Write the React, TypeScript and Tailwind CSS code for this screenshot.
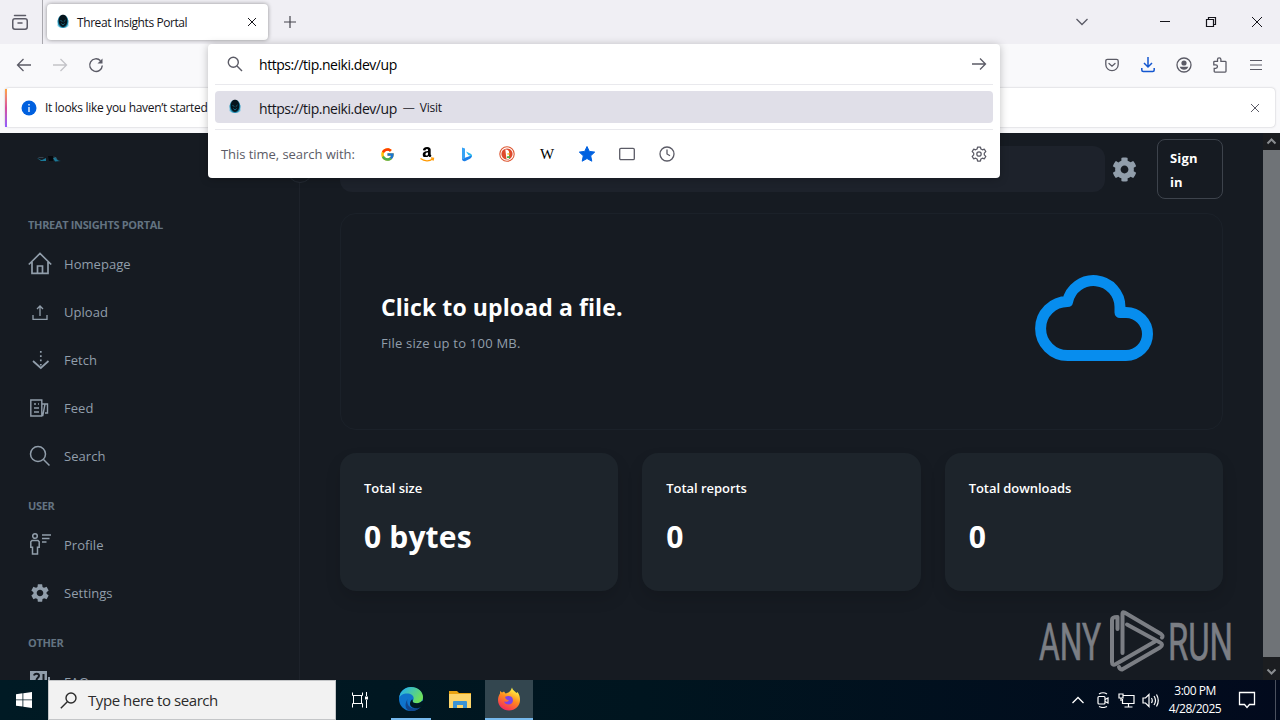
import { ReactNode } from 'react';
import { MdSettings } from 'react-icons/md';
import { FcGoogle } from 'react-icons/fc';
import { FaAmazon, FaCog } from 'react-icons/fa';

interface IconProps {
  children: ReactNode;
  size?: number;
  width?: number;
  className?: string;
}

// Shared wrapper for the stroked icons
const Icon = ({ children, size = 16, width = 1.3, className = '' }: IconProps) => (
  <svg
    width={size}
    height={size}
    viewBox={`0 0 ${size} ${size}`}
    fill="none"
    stroke="currentColor"
    strokeWidth={width}
    className={`shrink-0 ${className}`}
  >
    {children}
  </svg>
);

const Favicon = () => (
  <svg width="16" height="16" viewBox="0 0 16 16" className="shrink-0">
    <path d="M2.5 6v6l2 1.500h7l2-1.500V6" fill="#3bb9df" opacity=".6" />
    <path d="M8 1c3.200 0 5.300 2.900 5.300 6.500S11.200 14 8 14s-5.300-2.900-5.300-6.500S4.800 1 8 1Z" fill="#1b83a6" />
    <path d="M8 .8c2.700 0 4.300 2.700 4.300 6S10.600 13 8 13s-4.300-2.900-4.300-6.200S5.300.8 8 .8Z" fill="#06141c" />
    <path d="M5.500 6 7.300 7.800M10.500 6 8.700 7.800M6.300 9.500 8 11l1.700-1.500" stroke="#1c6f88" fill="none" strokeWidth=".9" />
  </svg>
);

/* ---------- Browser chrome ---------- */

const TabBar = () => (
  <div className="flex h-11 items-center bg-[#f0eff4] text-[#15141a]">
    <div className="flex h-11 w-[43px] items-center justify-center border-r border-[#a9a8ae] pr-[3px] text-[#5b5b66]">
      <Icon size={18} width={1.5}>
        <rect x="1.75" y="5.75" width="14.5" height="10.5" rx="2.2" />
        <path d="M3.5 2.5h11M7 10h4" strokeLinecap="round" />
      </Icon>
    </div>
    <div className="ml-1 flex h-9 w-[221px] items-center rounded bg-white pl-2 shadow-[0_0_4px_rgba(0,0,0,0.4)]">
      <Favicon />
      <span className="ml-1.5 flex-1 pt-0.5 text-[12px] tracking-[-0.42px] whitespace-nowrap">Threat Insights Portal</span>
      <Icon size={10} width={1} className="mr-[11px]">
        <path d="m1 1 8 8M9 1 1 9" />
      </Icon>
    </div>
    <Icon size={14} width={1.2} className="ml-[15px] text-[#45444c]">
      <path d="M7 1v12M1 7h12" />
    </Icon>
    <div className="flex-1" />
    <Icon size={14} width={1.3} className="mr-[70px] text-[#5b5b66]">
      <path d="m1.500 4 5.500 5.500L12.500 4" />
    </Icon>
    <Icon size={12} width={1} className="mr-[34px]">
      <path d="M1 5.500h10" />
    </Icon>
    <Icon size={12} width={1.2} className="mr-[34px]">
      <path d="M1.500 3.500h7v7h-7zM3.500 3.500v-2h7v7h-2" />
    </Icon>
    <Icon size={12} width={1} className="mr-[17px]">
      <path d="m1 1 10 10M11 1 1 11" />
    </Icon>
  </div>
);

const Toolbar = () => (
  <div className="flex h-11 items-center bg-[#f9f9fb] pb-[3px] text-[#5b5b66]">
    <Icon className="ml-4">
      <path d="M15 8H1.500M7.500 2l-6 6 6 6" />
    </Icon>
    <Icon className="ml-5 text-[#c3c3c8]">
      <path d="M1 8h13.500M8.500 2l6 6-6 6" />
    </Icon>
    <Icon className="ml-5" width={1.4}>
      <path d="M14.300 8.500A6.300 6.300 0 1 1 12.500 3.700" />
      <path d="M14.500 1.500v5h-5z" fill="currentColor" stroke="none" />
    </Icon>
    <div className="flex-1" />
    <Icon className="mr-5">
      <path d="M1.800 4c0-1.100.6-1.700 1.700-1.700h9c1.100 0 1.700.6 1.700 1.700v3.500a6.200 6.200 0 0 1-12.400 0Z" />
      <path d="m5 6.500 3 2.700 3-2.700" strokeLinecap="round" />
    </Icon>
    <Icon className="mr-5 text-[#1457d0]" width={1.5}>
      <path d="M8 0v9.500M4 6l4 4 4-4M1.800 11v2c0 1 .5 1.500 1.500 1.500h9.400c1 0 1.500-.5 1.500-1.500v-2" />
    </Icon>
    <Icon className="mr-5">
      <circle cx="8" cy="8" r="7" />
      <circle cx="8" cy="6" r="2.6" fill="currentColor" stroke="none" />
      <path d="M3.700 9.700h8.600c-.6 2-2.300 3-4.300 3s-3.700-1-4.300-3Z" fill="currentColor" stroke="none" />
    </Icon>
    <Icon className="mr-5">
      <path d="M5.500 4.300V2.500a1.700 1.700 0 0 1 3.400 0v1.800h4.300c.4 0 .8.300.8.800v9.200c0 .5-.4.800-.8.800H3c-.5 0-.8-.3-.8-.8v-3h1.500a1.500 1.500 0 0 0 0-3.500H1.800V5c0-.4.300-.7.700-.7Z" />
    </Icon>
    <Icon className="mr-4" width={1.2}>
      <path d="M2 3.500h12M2 8h12M2 12.500h12" />
    </Icon>
  </div>
);

const NotificationBar = () => (
  <div className="h-[45px] bg-[#f9f9fb] px-[5px]">
    <div className="flex h-[39px] items-center rounded bg-white pt-px shadow-[0_0_2px_rgba(58,57,68,0.35)]">
      <div className="h-full w-0.5 bg-linear-to-b from-[#ffa436] via-[#d74c9e] to-[#9059ff]" />
      <svg width="16" height="16" viewBox="0 0 16 16" className="ml-3.5 shrink-0">
        <circle cx="8" cy="8" r="7.5" fill="#0060df" />
        <path d="M8 7v5M8 4v1.500" stroke="#fff" strokeWidth="1.3" />
      </svg>
      <span className="ml-2 text-[12px] tracking-[-0.31px] whitespace-nowrap text-[#15141a]">It looks like you haven’t started</span>
      <div className="flex-1" />
      <Icon size={10} width={1} className="mr-[15px] text-[#5b5b66]">
        <path d="m1 1 8 8M9 1 1 9" />
      </Icon>
    </div>
  </div>
);

const BingLogo = () => (
  <svg width="16" height="16" viewBox="0 0 16 16">
    <path d="M3 1.500 6 2.600v9.200L3 13.500Z" fill="#37a3f5" />
    <path d="M3 13.300 6 11.800l7-2.500c.1 1.700-.7 2.700-2 3.400L6.500 15c-1.800.7-3.200-.2-3.500-1.700Z" fill="#1b7fe8" />
    <path d="m7 5.500 4.700 2.200c1.100.6 1.500 1.500 1.200 2.800L9.300 9Z" fill="#28b7ee" />
  </svg>
);

const DuckLogo = () => (
  <svg width="16" height="16" viewBox="0 0 16 16">
    <circle cx="8" cy="8" r="7.2" fill="#fff" stroke="#de5833" strokeWidth="1.1" />
    <circle cx="8" cy="8" r="5.6" fill="#de4a2d" />
    <path d="M6.300 3.500c2.500-.3 4 1.200 3.800 3.500L10 13H7.500Z" fill="#fff" />
    <path d="M8.300 7.300h2.500v1.300H8.300Z" fill="#fdb913" />
    <path d="M8 10.300 11 10v2.200l-3-.3Z" fill="#4caf50" />
  </svg>
);

const GearOutline = () => (
  <Icon size={16} width={1.25}>
    <path d="M6.600 1h2.800l.5 2 1.500.8 2-.6 1.400 2.400-1.500 1.500v1.800l1.500 1.500-1.400 2.400-2-.6-1.500.8-.5 2H6.600l-.5-2-1.500-.8-2 .6-1.400-2.400 1.500-1.500V7.100L1.200 5.600l1.400-2.400 2 .6L6.100 3Z" strokeLinejoin="round" />
    <circle cx="8" cy="8" r="2.2" />
  </Icon>
);

const searchEngines: ReactNode[] = [
  <FcGoogle size={15} />,
  <span className="relative h-4 w-4">
    <FaAmazon size={16} className="text-black" />
    <svg width="16" height="6" viewBox="0 0 16 6" className="absolute -bottom-px left-0 bg-white">
      <path d="M1.500 1.500c4 3 9 3 12 .5M12 1l2.500.3-.5 2.400" fill="none" stroke="#f90" strokeWidth="1.3" />
    </svg>
  </span>,
  <BingLogo />,
  <DuckLogo />,
  <span className="font-['Liberation_Serif',serif] text-[15px] leading-none text-black">W</span>,
  <svg width="18" height="18" viewBox="0 0 18 18" fill="#0061e0">
    <path d="m9 1.500 2.300 4.900 5.400.7-4 3.700 1.100 5.400L9 13.500l-4.800 2.700 1.100-5.400-4-3.700 5.400-.7Z" stroke="#0061e0" strokeLinejoin="round" />
  </svg>,
  <Icon>
    <rect x=".7" y="2.4" width="14.6" height="11.2" rx="1.2" />
  </Icon>,
  <Icon>
    <circle cx="8" cy="8" r="7" />
    <path d="M8 3.500V8l3 1.800" />
  </Icon>,
];

const UrlDropdown = () => (
  <div className="absolute top-11 left-[208px] flex h-[134px] w-[792px] flex-col rounded bg-white px-[7px] text-[#15141a] shadow-[0_1px_8px_rgba(0,0,0,0.25)]">
    <div className="flex h-[41px] items-center border-b border-[#e9e9ed] pl-3 text-[#5b5b66]">
      <Icon width={1.4}>
        <circle cx="6.3" cy="6.3" r="5" />
        <path d="m10 10 5 5" />
      </Icon>
      <span className="ml-4 flex-1 pt-px text-[14px] tracking-[-0.46px] text-black">https://tip.neiki.dev/up</span>
      <Icon className="mr-1.5">
        <path d="M1 8h13.500M9 2.500 14.500 8 9 13.500" />
      </Icon>
    </div>
    <div className="mt-1.5 flex h-8 shrink-0 items-center rounded-sm bg-[#e0dfe8] pl-3">
      <Favicon />
      <span className="ml-4 pt-0.5 text-[14px] tracking-[-0.46px] whitespace-nowrap">https://tip.neiki.dev/up</span>
      <span className="ml-1.5 pt-0.5 text-[12px] text-[#45444c]">—</span>
      <span className="ml-[5px] pt-0.5 text-[12px] tracking-[-0.2px]">Visit</span>
    </div>
    <div className="mt-1.5 flex h-[49px] shrink-0 items-center border-t border-[#e9e9ed] pl-1.5 text-[#5b5b66]">
      <span className="w-[146px] pt-0.5 text-[13px] tracking-[-0.05px] whitespace-nowrap">This time, search with:</span>
      {searchEngines.map((engine, i) => (
        <span key={i} className="flex w-10 items-center justify-center">
          {engine}
        </span>
      ))}
      <span className="mr-1.5 ml-auto">
        <GearOutline />
      </span>
    </div>
  </div>
);

/* ---------- Portal page ---------- */

const HomeIcon = () => (
  <Icon size={24} width={1.7}>
    <path d="M.8 12.500 12 1.500l11.200 11M4 10v11.300h16V10M9.500 21v-7h5v7" />
  </Icon>
);

const UploadIcon = () => (
  <Icon size={24} width={1.3}>
    <path d="M12 16V6M9 9l3-3 3 3M5 15v4.300h14V15" />
  </Icon>
);

const FetchIcon = () => (
  <Icon size={24} width={1.7}>
    <path d="m5 13 7.800 7 7.700-7" />
    <path d="M12.800 3v16" strokeDasharray="1.700 2.600" />
  </Icon>
);

const FeedIcon = () => (
  <Icon size={24} width={1.4}>
    <path d="M2.800 4h11v16h-11zM14 8h5.500v9H17M17 8l-2.300 12M6 8h2M10 8h1M6 12h5M6 16h5" />
  </Icon>
);

const SearchIcon = () => (
  <Icon size={24} width={1.5}>
    <circle cx="10" cy="10" r="7.5" />
    <path d="m15.500 15.500 6 6" />
  </Icon>
);

const ProfileIcon = () => (
  <Icon size={24} width={1.5} className="-mt-0.5">
    <circle cx="7" cy="4" r="2.3" />
    <path d="M4 8.500h6l1.200 1.200v5.500H9.500V22h-5v-6.800H2.800V9.700ZM14 3h9M14 6.500h7.500M14 10h4.500" />
  </Icon>
);

const FaqIcon = () => (
  <svg width="24" height="24" viewBox="0 0 24 24" className="shrink-0" fill="currentColor">
    <path d="M2 1h17v16H6l-4 4Zm18 6h2v14H8v-2h12Z" />
    <path d="M6 5.500C6.500 3 11 3 11 5.800c0 2-2.500 2-2.500 4.400M8.500 12v2M15.500 4v6.500M15.500 12v2" fill="none" stroke="#161b22" strokeWidth="2" />
  </svg>
);

const menu = [
  {
    title: 'THREAT INSIGHTS PORTAL',
    items: [
      { label: 'Homepage', icon: <HomeIcon /> },
      { label: 'Upload', icon: <UploadIcon /> },
      { label: 'Fetch', icon: <FetchIcon /> },
      { label: 'Feed', icon: <FeedIcon /> },
      { label: 'Search', icon: <SearchIcon /> },
    ],
  },
  {
    title: 'USER',
    items: [
      { label: 'Profile', icon: <ProfileIcon /> },
      { label: 'Settings', icon: <MdSettings size={22} className="mx-px" /> },
    ],
  },
  { title: 'OTHER', items: [{ label: 'FAQs', icon: <FaqIcon /> }] },
];

const Sidebar = () => (
  <aside className="w-[300px] shrink-0 overflow-hidden border-r border-[#1d222a] pl-7">
    <div className="h-[66px] pt-[19px] pl-2">
      <svg width="26" height="12" viewBox="0 0 24 12">
        <path d="M0 6c2 .5 3 2 5 2l4-2v3H4ZM24 9c-3 0-4-1-5-4l-3 1 2 3.500Z" fill="#1b7a99" />
        <path d="M1.500 5.500h5M17 4.500l3 3" stroke="#3d4b55" strokeWidth=".8" />
        <path d="M11 4h5v5h-4Z" fill="#05090d" />
      </svg>
    </div>
    {menu.map((section) => (
      <div key={section.title}>
        <div className="h-[41px] pt-[17px] text-[11px] leading-[18px] font-bold tracking-[-0.33px] text-[#637381]">
          {section.title}
        </div>
        {section.items.map((item) => (
          <div key={item.label} className="flex h-12 items-center gap-3 text-[13px] tracking-[0.05px] text-[#919eab]">
            {item.icon}
            <span className="pt-0.5">{item.label}</span>
          </div>
        ))}
      </div>
    ))}
  </aside>
);

const stats = [
  { label: 'Total size', value: '0 bytes' },
  { label: 'Total reports', value: '0' },
  { label: 'Total downloads', value: '0' },
];

const CloudIcon = () => (
  <svg
    width="120"
    height="88"
    viewBox="1034 274 120 88"
    fill="none"
    stroke="#078dee"
    strokeWidth="11"
    strokeLinejoin="round"
    className="mb-[7px]"
  >
    <path d="M1067.600 355.500A27 27 0 0 1 1067.600 301.500A26.500 26.500 0 0 1 1120 307V312.500H1126A21.500 21.500 0 0 1 1126 355.500Z" />
  </svg>
);

const Watermark = () => (
  <svg width="200" height="64" viewBox="0 0 200 64" className="absolute top-[609px] left-[1038px]" fill="none">
    <g fill="#7b7e84" stroke="#7b7e84" strokeWidth=".7" fontFamily="Roboto, sans-serif" fontSize="52">
      <text x="1" y="50.5" textLength="62" lengthAdjust="spacingAndGlyphs">ANY</text>
      <text x="130" y="50.5" textLength="65" lengthAdjust="spacingAndGlyphs">RUN</text>
    </g>
    <g stroke="#7b7e84" strokeWidth="4" strokeLinejoin="round" strokeLinecap="round">
      <path d="M84.500 44V4.500q0-2 2-1L123 25q2.500 2 1 3.500" />
      <path d="M79.500 20V8q-5.500 0-5.500 3v42q0 4 4 2l39-22.500" />
      <path d="m89 15.500 33 18q4 2 0 5L84 60.500q-2 0-3-2.500" />
    </g>
  </svg>
);

const Page = () => (
  <div className="flex h-[547px] overflow-hidden bg-[#161b22]">
    <Sidebar />
    <main className="flex-1 pr-10 pl-10">
      <div className="flex items-center pt-1.5">
        <div className="h-[46px] w-[765px] rounded-xl bg-[#1d222b]" />
        <FaCog size={25} className="ml-[7px] text-[#919eab]" />
        <button className="ml-auto h-[60px] w-[66px] rounded-lg border border-[#3d434c] px-3 pt-0.5 text-left text-[13px] leading-6 font-bold tracking-[0.15px] text-white">
          Sign in
        </button>
      </div>
      <div className="mt-3.5 flex h-[217px] items-center justify-between rounded-2xl border border-[#1b2129] pr-[68px] pl-10">
        <div>
          <h1 className="text-[23px] leading-9 font-bold tracking-[0.1px] text-white">Click to upload a file.</h1>
          <p className="mt-1.5 text-[13px] leading-6 tracking-[0.22px] text-[#919eab]">File size up to 100 MB.</p>
        </div>
        <CloudIcon />
      </div>
      <div className="mt-[23px] grid grid-cols-3 gap-6">
        {stats.map((stat) => (
          <div key={stat.label} className="h-[138px] rounded-2xl bg-[#1d242b] px-6 pt-6 text-white shadow-[0_8px_16px_rgba(0,0,0,0.12)]">
            <div className="text-[13px] leading-[22px] font-semibold tracking-[-0.05px]">{stat.label}</div>
            <div className="mt-3.5 text-[30px] leading-[48px] font-bold tracking-[0.15px]">{stat.value}</div>
          </div>
        ))}
      </div>
    </main>
    <div className="flex w-[17px] flex-col items-center bg-[#1b1d20] text-[#8a8d90]">
      <Icon size={17} width={2}>
        <path d="m4.500 10.500 4-4 4 4" />
      </Icon>
      <div className="w-full flex-1 bg-[#6f7377]" />
      <div className="flex h-[23px] items-end">
        <Icon size={17} width={2}>
          <path d="m4.500 6.500 4 4 4-4" />
        </Icon>
      </div>
    </div>
  </div>
);

/* ---------- Windows taskbar ---------- */

const EdgeLogo = () => (
  <svg width="26" height="26" viewBox="0 0 26 26">
    <defs>
      <linearGradient id="edge-top" x1="0" y1="0" x2="1" y2="0.5">
        <stop offset="0.2" stopColor="#2bb5df" />
        <stop offset="1" stopColor="#6ee05a" />
      </linearGradient>
    </defs>
    <circle cx="13" cy="13" r="12" fill="#0f74cc" />
    <path d="M1.200 12C2 5 7 1 13 1c7 0 12 4.600 12 10 0 4-2.600 6.200-6 6.200-3 0-4.300-1-4.300-2 0-.8 1-1.200 1-3C15.700 9.500 12.700 7.500 9 7.500c-4 0-7 2-7.800 4.500Z" fill="url(#edge-top)" />
    <path d="M9.500 13c-1.500 5 2 9.500 7.500 9.500 2.500 0 4.500-.7 6.300-2C21 23.500 17 25 13.500 25 8 25 5.500 20 9.500 13Z" fill="#11478f" />
    <path d="M14.700 15.200c0 1 1.300 2 4.300 2 2 0 4-.8 5.200-2.400l1.800 1-1.800 4.500c-2 1.500-4.200 2-6.200 2-4 0-6-2.300-6-4.500 0-1.800 1-3.400 2.200-4.600.6.800.5 1.400.5 2Z" fill="#001923" />
  </svg>
);

const FolderLogo = () => (
  <svg width="22" height="20" viewBox="0 0 22 20">
    <path d="M0 1h8l2 2h12v4H0Z" fill="#e8a311" />
    <path d="M0 4h22v14H0Z" fill="#fcd56b" />
    <path d="M4 18v-6q0-1 1-1h12q1 0 1 1v6h-4v-3H8v3Z" fill="#3a93d6" />
  </svg>
);

const FirefoxLogo = () => (
  <svg width="24" height="24" viewBox="0 0 24 24">
    <defs>
      <linearGradient id="fox" x1="0.8" y1="0" x2="0.3" y2="1">
        <stop offset="0.1" stopColor="#fff044" />
        <stop offset="0.5" stopColor="#ff8a1d" />
        <stop offset="1" stopColor="#f5265f" />
      </linearGradient>
    </defs>
    <path d="M15 .5c.3 2.500 3 3.500 4.500 5.500l1-1c2 3 2.500 5 2.500 8 0 6-5 10.500-11 10.500S1 19 1 13c0-3 1-5 2-6.500V4l2 1.500L7 4.500l1.500 2c2-.5 5-1 6.500-6Z" fill="url(#fox)" />
    <path d="M8 10c2-1.500 4.500-1.300 6-.5 2.500 1.500 2.500 5.500.5 7-2.500 1.800-6.500.8-7.500-2 2 .7 4 .3 5-1-1.500-.5-3.500-1-4-3.500Z" fill="#7b44e6" />
  </svg>
);

const Taskbar = () => (
  <div className="flex h-10 items-stretch bg-linear-to-r from-[#001a24] via-[#00151f] to-[#020a1d] text-white">
    <div className="flex w-12 items-center justify-center">
      <svg width="16" height="16" viewBox="0 0 16 16" fill="#fff">
        <path d="M0 2.300 6.500 1.300v6.200H0ZM7.300 1.200 16 0v7.500H7.300ZM0 8.300h6.500v6.300L0 13.700ZM7.300 8.300H16V16l-8.700-1.200Z" />
      </svg>
    </div>
    <div className="flex w-72 items-center border border-[#c4c6c8] bg-[#f2f2f2] pl-[11px] text-[#2b2b2b]">
      <Icon size={17} width={1.4}>
        <circle cx="11" cy="6" r="5" />
        <path d="m7.300 9.700-6.500 6.500" />
      </Icon>
      <span className="ml-[11px] text-[15px] tracking-[-0.43px] whitespace-nowrap">Type here to search</span>
    </div>
    <div className="flex w-12 items-center justify-center">
      <Icon size={16} width={1}>
        <path d="M.5.500v3h10v-3M1.500 3.500v8M9.500 3.500v8M.5 15.500v-4h10v4M14.500 0v4M14.500 8v8" />
        <path d="M13 4.500h3v3h-3z" fill="currentColor" stroke="none" />
      </Icon>
    </div>
    <div className="ml-[7px] flex w-10 items-center justify-center border-b-2 border-[#76b9ed]">
      <EdgeLogo />
    </div>
    <div className="ml-1 flex w-[50px] items-center justify-center">
      <FolderLogo />
    </div>
    <div className="flex w-12 items-center justify-center border-b-2 border-[#76b9ed] bg-[#33464f]">
      <FirefoxLogo />
    </div>
    <div className="flex-1" />
    <div className="flex items-center">
      <Icon size={12} width={1.3} className="mr-[11px]">
        <path d="m.5 9 5.500-5.500L11.500 9" />
      </Icon>
      <Icon size={16} width={1.2} className="mr-[7px]">
        <rect x="3" y="4.5" width="7" height="7.5" rx="1" />
        <path d="m10 7.500 3-1.500v5l-3-1.500M4 2q4-2.500 8 0M4 14.500q4 2 8 0" />
      </Icon>
      <Icon size={17} width={1.2} className="mr-[7px]">
        <path d="M5 3.500h11v8H4.500V7M10.500 11.500v3.500M6.500 15h8M1 2h4v4H1zM3 6v3" />
      </Icon>
      <Icon size={17} width={1.2} className="mr-[10px]">
        <path d="M1 6h2.500L7 2.500v12L3.500 11H1ZM9.500 6q1.500 2.500 0 5M12 4q3 4.500 0 9M14.500 2.500q3.500 6 0 12" />
      </Icon>
      <div className="w-[52px] text-center text-[12px] leading-[18px] tracking-[-0.5px] whitespace-nowrap">
        <div>3:00 PM</div>
        <div className="-mx-2">4/28/2025</div>
      </div>
      <Icon size={18} width={1.3} className="mr-[19px] ml-[17px]">
        <path d="M1.500 1.500h15v12h-5L9 16.500l-2.500-3h-5Z" />
      </Icon>
      <div className="mr-1 h-full w-px bg-[#4b515f]" />
    </div>
  </div>
);

const App = () => (
  <div className="relative h-[720px] w-[1280px] overflow-hidden font-['Open_Sans',sans-serif]">
    <TabBar />
    <Toolbar />
    <NotificationBar />
    <Page />
    <Taskbar />
    <span className="absolute top-[157px] left-[287px] h-[26px] w-[26px] rounded-full border border-[#252b34] bg-[#161b22]" />
    <UrlDropdown />
    <Watermark />
  </div>
);

export default App;
